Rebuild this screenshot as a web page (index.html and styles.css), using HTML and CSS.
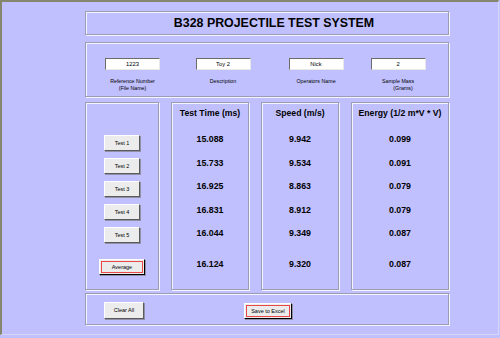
FILE: index.html
```html
<!DOCTYPE html>
<html>
<head>
<meta charset="utf-8">
<link rel="stylesheet" href="styles.css">
</head>
<body>
<div class="window">
  <div class="main">
    <div class="frame title-frame">B328 PROJECTILE TEST SYSTEM</div>

    <div class="frame inputs-frame">
      <div class="field">
        <div class="input">1223</div>
        <div class="label">Reference Number<br>(File Name)</div>
      </div>
      <div class="field">
        <div class="input">Toy 2</div>
        <div class="label">Description</div>
      </div>
      <div class="field">
        <div class="input">Nick</div>
        <div class="label">Operators Name</div>
      </div>
      <div class="field">
        <div class="input">2</div>
        <div class="label">Sample Mass<br><span class="indent">(Grams)</span></div>
      </div>
    </div>

    <div class="results">
      <div class="frame buttons-col">
        <div class="btn test">Test 1</div>
        <div class="btn test">Test 2</div>
        <div class="btn test">Test 3</div>
        <div class="btn test">Test 4</div>
        <div class="btn test">Test 5</div>
        <div class="btn avg focus">Average</div>
      </div>
      <div class="frame data-col">
        <div class="head">Test Time (ms)</div>
        <div class="rows">
          <div class="val">15.088</div>
          <div class="val">15.733</div>
          <div class="val">16.925</div>
          <div class="val">16.831</div>
          <div class="val">16.044</div>
          <div class="val avg-val">16.124</div>
        </div>
      </div>
      <div class="frame data-col">
        <div class="head">Speed (m/s)</div>
        <div class="rows">
          <div class="val">9.942</div>
          <div class="val">9.534</div>
          <div class="val">8.863</div>
          <div class="val">8.912</div>
          <div class="val">9.349</div>
          <div class="val avg-val">9.320</div>
        </div>
      </div>
      <div class="frame data-col energy">
        <div class="head">Energy (1/2 m*V * V)</div>
        <div class="rows">
          <div class="val">0.099</div>
          <div class="val">0.091</div>
          <div class="val">0.079</div>
          <div class="val">0.079</div>
          <div class="val">0.087</div>
          <div class="val avg-val">0.087</div>
        </div>
      </div>
    </div>

    <div class="frame bottom-frame">
      <div class="btn clear">Clear All</div>
      <div class="btn save focus">Save to Excel</div>
    </div>
  </div>
</div>
</body>
</html>
```

FILE: styles.css
```css
* { box-sizing: border-box; }

html, body {
  margin: 0;
  padding: 0;
  background: #c0c0ff;
}

body {
  font-family: "Liberation Sans", Arial, sans-serif;
  color: #000;
}

.window {
  width: 499px;
  height: 335px;
  background: #c0c0ff;
  border-top: 2px solid #86866e;
  border-left: 2px solid #86866e;
  border-right: 1px solid #d6d6f6;
  border-bottom: 1px solid #d6d6f6;
  padding: 9px 0 0 83px;
}

.main {
  width: 364px;
  display: flex;
  flex-direction: column;
}

.frame {
  border: 1px solid #9c9cb4;
  box-shadow: inset 1px 1px 0 #f4f4ff, 1px 1px 0 #f4f4ff;
}

.title-frame {
  height: 24px;
  font-weight: bold;
  font-size: 12.4px;
  line-height: 22px;
  text-align: center;
  padding-left: 14px;
}

.inputs-frame {
  margin-top: 7px;
  height: 55px;
  padding-top: 15px;
  display: grid;
  grid-template-columns: 93px 88px 98px 66px;
}

.field {
  display: flex;
  flex-direction: column;
  align-items: center;
}

.input {
  width: 55px;
  height: 12px;
  background: #fff;
  border-top: 1px solid #6c6c6c;
  border-left: 1px solid #6c6c6c;
  border-right: 1px solid #e8e8e8;
  border-bottom: 1px solid #e8e8e8;
  font-size: 5.8px;
  line-height: 10px;
  text-align: center;
}

.label {
  margin-top: 8px;
  font-size: 5.3px;
  line-height: 7px;
  text-align: center;
  white-space: nowrap;
}

.indent { padding-left: 10px; }

.results {
  margin-top: 5px;
  height: 188px;
  display: grid;
  grid-template-columns: 74px 78px 78px 98px;
  column-gap: 12px;
}

.buttons-col {
  display: flex;
  flex-direction: column;
  align-items: center;
  padding-top: 32px;
  gap: 7px;
}

.btn {
  height: 16px;
  background: #ececec;
  border-top: 1px solid #fff;
  border-left: 1px solid #fff;
  border-right: 1px solid #5a5a5a;
  border-bottom: 1px solid #5a5a5a;
  box-shadow: 1px 1px 0 #9090a8;
  font-size: 5.5px;
  line-height: 14px;
  text-align: center;
  white-space: nowrap;
}

.test { width: 36px; }

.avg {
  width: 46px;
  margin-top: 9px;
  border-right-color: #000;
  border-bottom-color: #000;
}

.focus {
  outline: 1px solid #e84848;
  outline-offset: -3px;
}

.data-col {
  display: flex;
  flex-direction: column;
  align-items: center;
}

.head {
  height: 20px;
  line-height: 20px;
  font-weight: bold;
  font-size: 8.7px;
  white-space: nowrap;
}

.rows {
  margin-top: 5px;
  display: flex;
  flex-direction: column;
  align-items: center;
}

.val {
  height: 23.5px;
  line-height: 23.5px;
  font-weight: bold;
  font-size: 8.8px;
}

.avg-val { margin-top: 7px; }

.bottom-frame {
  margin-top: 3px;
  height: 32px;
  padding-top: 8px;
  display: flex;
  align-items: flex-start;
}

.clear {
  width: 40px;
  height: 17px;
  margin-left: 18px;
  line-height: 15px;
}

.save {
  width: 48px;
  margin-left: 100px;
  margin-top: 1px;
  border-right-color: #000;
  border-bottom-color: #000;
}
```
